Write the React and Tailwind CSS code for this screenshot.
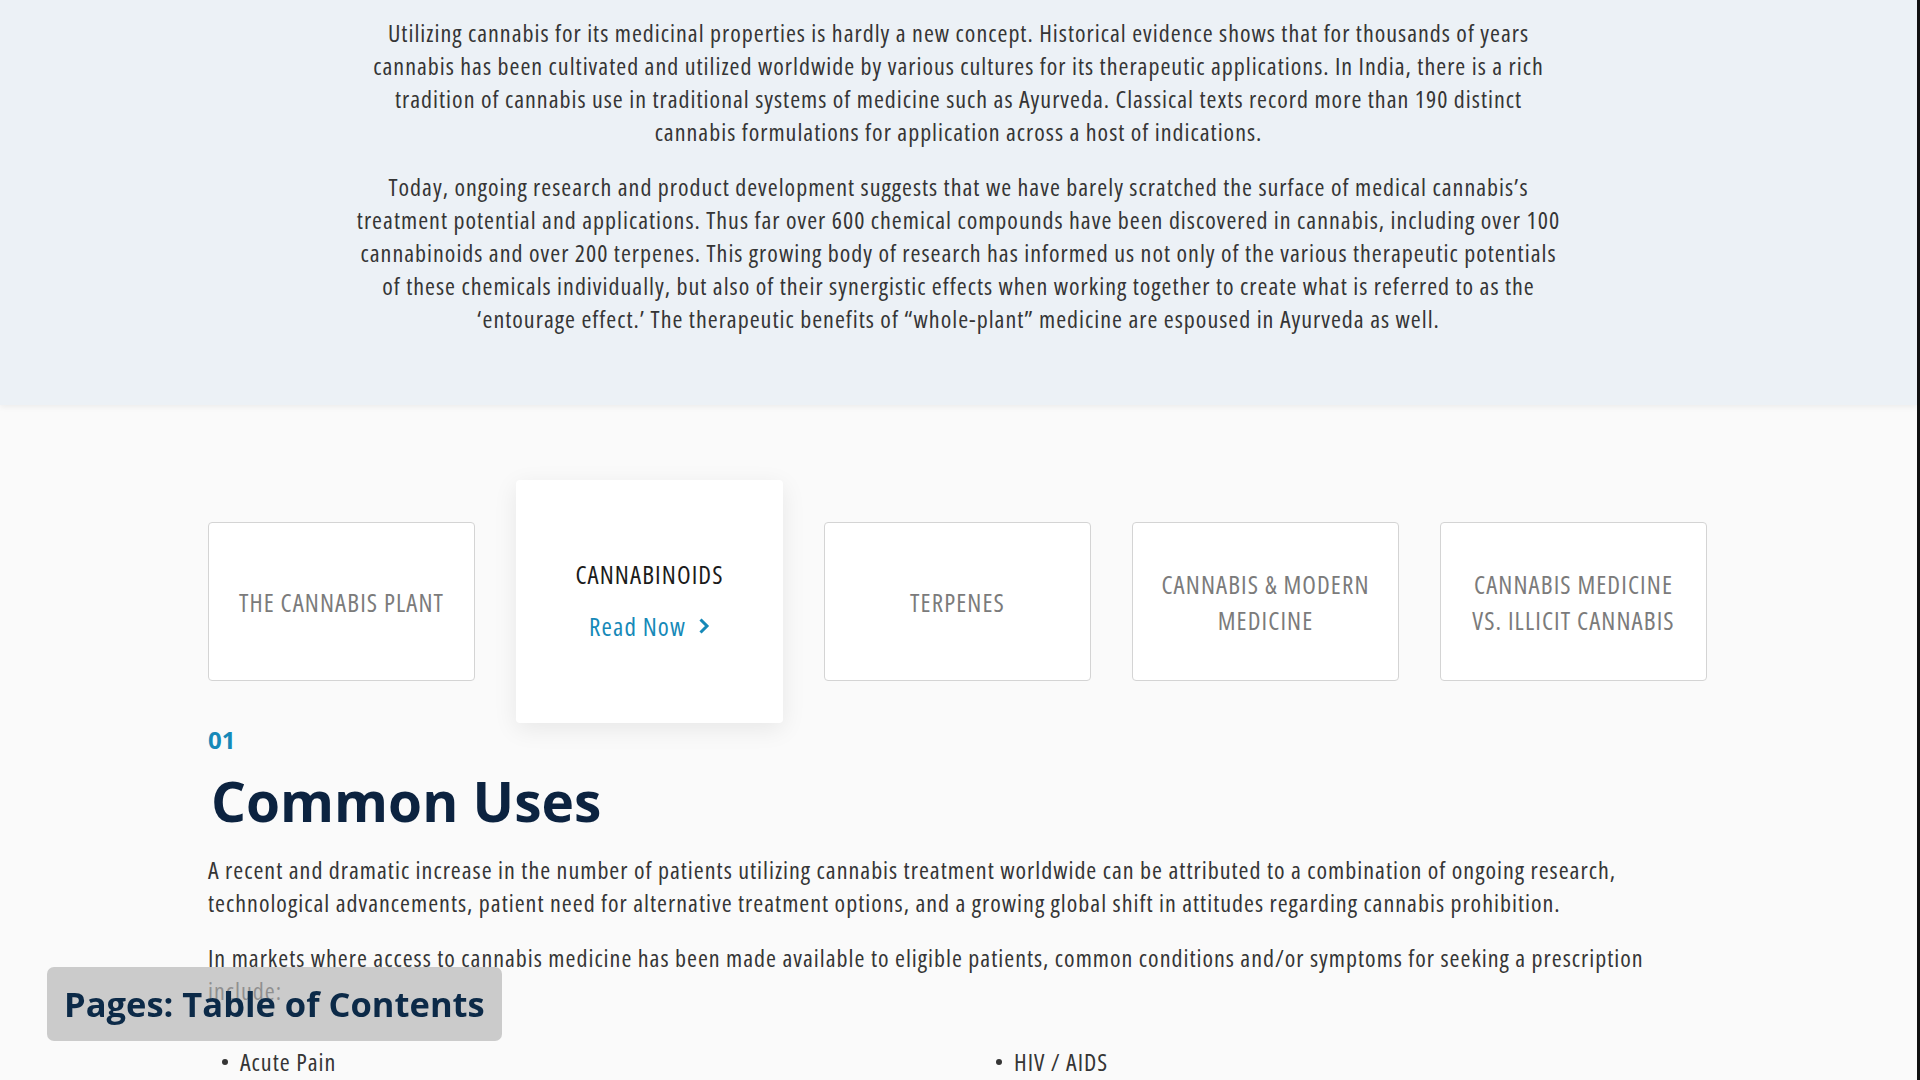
import React from 'react';

const cond = "font-['Open_Sans',sans-serif] font-stretch-[75%] tracking-[1px]";
const condCard = "font-['Open_Sans',sans-serif] font-stretch-[75%] tracking-[1.1px]";

const topics = [
  { title: 'THE CANNABIS PLANT' },
  { title: 'CANNABINOIDS', active: true },
  { title: 'TERPENES' },
  { title: 'CANNABIS & MODERN MEDICINE', lines: ['CANNABIS & MODERN', 'MEDICINE'] },
  { title: 'CANNABIS MEDICINE VS. ILLICIT CANNABIS', lines: ['CANNABIS MEDICINE', 'VS. ILLICIT CANNABIS'] },
];

function TopicCard({ topic }) {
  if (topic.active) {
    return (
      <div className="w-[267px] h-[243px] shrink-0 bg-white rounded-[4px] shadow-[0_6px_24px_rgba(0,0,0,0.08)] flex flex-col items-center pt-[76px]">
        <div className={`${condCard} text-[25px] leading-[36px] text-[#1b1b1b]`}>{topic.title}</div>
        <div className={`${condCard} mt-[18px] flex items-center gap-[12px] text-[25px] leading-[32px] text-[#1689b8]`}>
          Read Now
          <svg width="12" height="18" viewBox="0 0 12 18" fill="none">
            <path d="M2.5 2.5 L9 9 L2.5 15.5" stroke="#1689b8" strokeWidth="3" />
          </svg>
        </div>
      </div>
    );
  }
  const lines = topic.lines || [topic.title];
  return (
    <div className="w-[267px] h-[159px] shrink-0 bg-white border border-[#d4d4d4] rounded-[4px] flex flex-col items-center justify-center">
      {lines.map((l) => (
        <div key={l} className={`${condCard} text-[25px] leading-[36px] text-[#7b7b7b]`}>{l}</div>
      ))}
    </div>
  );
}

export default function App() {
  return (
    <div className="h-[1080px] overflow-hidden bg-[#fafafa] border-r-[3px] border-[#111]">
      <section className="bg-[#ecf1f6] shadow-[0_2px_6px_rgba(0,0,0,0.06)] pt-[16px] pb-[70px] relative">
        <div className={`${cond} max-w-[1240px] mx-auto text-center text-[24px] leading-[33px] text-[#353535]`}>
          <p>
            Utilizing cannabis for its medicinal properties is hardly a new concept. Historical evidence shows that for thousands of years<br />
            cannabis has been cultivated and utilized worldwide by various cultures for its therapeutic applications. In India, there is a rich<br />
            tradition of cannabis use in traditional systems of medicine such as Ayurveda. Classical texts record more than 190 distinct<br />
            cannabis formulations for application across a host of indications.
          </p>
          <p className="mt-[22px]">
            Today, ongoing research and product development suggests that we have barely scratched the surface of medical cannabis’s<br />
            treatment potential and applications. Thus far over 600 chemical compounds have been discovered in cannabis, including over 100<br />
            cannabinoids and over 200 terpenes. This growing body of research has informed us not only of the various therapeutic potentials<br />
            of these chemicals individually, but also of their synergistic effects when working together to create what is referred to as the<br />
            ‘entourage effect.’ The therapeutic benefits of “whole-plant” medicine are espoused in Ayurveda as well.
          </p>
        </div>
      </section>

      <main className="max-w-[1501px] mx-auto pt-[75px]">
        <div className="flex items-center gap-[41px]">
          {topics.map((t) => (
            <TopicCard key={t.title} topic={t} />
          ))}
        </div>

        <div className="mt-[3px] font-['Open_Sans',sans-serif] font-bold text-[24px] leading-[28px] text-[#1689b8]">01</div>
        <h1 className="mt-[12px] ml-[3px] font-['Open_Sans',sans-serif] font-bold text-[55px] leading-[70px] text-[#0c2340]">
          Common Uses
        </h1>

        <div className={`${cond} mt-[17px] text-[24px] leading-[33px] text-[#353535]`}>
          <p>
            A recent and dramatic increase in the number of patients utilizing cannabis treatment worldwide can be attributed to a combination of ongoing research,<br />
            technological advancements, patient need for alternative treatment options, and a growing global shift in attitudes regarding cannabis prohibition.
          </p>
          <p className="mt-[22px]">
            In markets where access to cannabis medicine has been made available to eligible patients, common conditions and/or symptoms for seeking a prescription<br />
            include:
          </p>
          <ul className="mt-[38px] grid grid-cols-[774px_1fr]">
            <li className="flex items-center gap-[12px] pl-[14px]">
              <span className="w-[6px] h-[6px] rounded-full bg-[#353535]" />
              Acute Pain
            </li>
            <li className="flex items-center gap-[12px] pl-[14px]">
              <span className="w-[6px] h-[6px] rounded-full bg-[#353535]" />
              HIV / AIDS
            </li>
          </ul>
        </div>
      </main>

      <div className="fixed left-[47px] top-[967px] w-[455px] h-[74px] bg-[rgba(182,182,182,0.7)] rounded-[7px] flex items-center pl-[17px]">
        <span className="font-['Open_Sans',sans-serif] font-bold text-[34.5px] text-[#0c2a48]">Pages: Table of Contents</span>
      </div>
    </div>
  );
}
